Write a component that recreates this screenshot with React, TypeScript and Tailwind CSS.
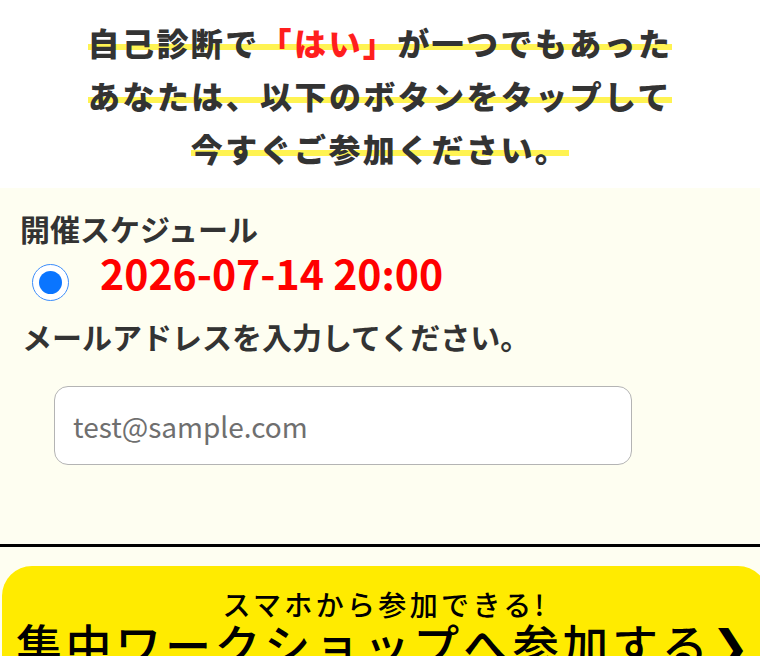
import { useState } from "react"

const jp = "font-['Noto_Sans_CJK_JP','Noto_Sans',sans-serif]"

// yellow marker stroke under each wrapped line of the lead copy
const marker =
  "bg-[linear-gradient(transparent_55%,#fff352_55%,#fff352_68%,transparent_68%)] [box-decoration-break:clone]"

const Lead = () => (
  <div className={`${jp} pt-[16px] text-center text-[32px] font-black leading-[53px] tracking-[0.075em] text-[#333]`}>
    <p>
      <span className={marker}>
        自己診断で<span className="text-[#ff1e1e]">「はい」</span>が一つでもあった
      </span>
    </p>
    <p>
      <span className={marker}>あなたは、以下のボタンをタップして</span>
    </p>
    <p>
      <span className={marker}>今すぐご参加ください。</span>
    </p>
  </div>
)

const Radio = ({ checked }: { checked: boolean }) => (
  <span className="flex h-[37px] w-[37px] shrink-0 items-center justify-center rounded-full border-[1.5px] border-[#3d8dfb] bg-white">
    {checked && <span className="h-[23px] w-[23px] rounded-full bg-[#0a75ff]" />}
  </span>
)

const EntryForm = () => {
  const [email, setEmail] = useState("")

  return (
    <div className={`${jp} bg-[#fefef1] pt-[20px] text-[#333]`}>
      <h3 className="pl-[20px] text-[30px] font-bold leading-[40px]">開催スケジュール</h3>
      <label className="flex items-start pl-[32px]">
        <span className="mt-[16px]">
          <Radio checked />
        </span>
        <span className="ml-[31px] text-[41px] font-bold leading-[48px] text-[#ff0000]">
          2026-07-14 20:00
        </span>
      </label>
      <p className="pl-[22px] pt-[14px] text-[30px] font-bold leading-[42px]">
        メールアドレスを入力してください。
      </p>
      <div className="pb-[79px] pl-[54px] pt-[29px]">
        <input
          type="email"
          value={email}
          onChange={(e) => setEmail(e.target.value)}
          placeholder="test@sample.com"
          className={`${jp} h-[79px] w-[578px] rounded-[14px] border-[1.5px] border-[#b4b4b4] bg-white px-[18px] text-[28px] text-[#333] outline-none placeholder:text-[#6f6f6f]`}
        />
      </div>
    </div>
  )
}

const JoinButton = () => (
  <div className="bg-[#fefef1] pt-[19px]">
    <button
      className={`${jp} ml-[2px] flex w-[766px] flex-col items-center rounded-[30px] bg-[#ffeb00] pt-[20px] pb-[24px] text-black`}
    >
      <span className="text-[28px] font-medium leading-[36px] tracking-[0.12em]">スマホから参加できる!</span>
      <span className="mt-[-5px] text-[46px] font-medium leading-[52px] tracking-[0.08em]">集中ワークショップへ参加する❯</span>
    </button>
  </div>
)

export default function App() {
  return (
    <div className="h-[656px] w-full overflow-hidden bg-white">
      <Lead />
      <div className="mt-[13px]">
        <EntryForm />
        <div className="h-[3px] bg-black" />
        <JoinButton />
      </div>
    </div>
  )
}
